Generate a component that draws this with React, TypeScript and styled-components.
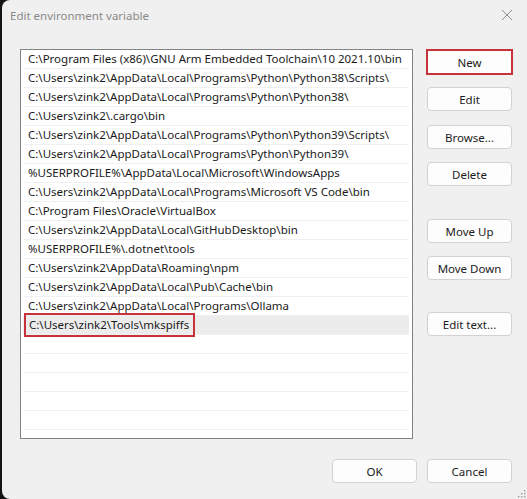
import React from "react";
import { styled, createGlobalStyle } from "styled-components";

const GlobalStyle = createGlobalStyle`
  html, body {
    margin: 0;
    padding: 0;
    background: #141414;
  }
  * {
    box-sizing: border-box;
  }
`;

const paths = [
  "C:\\Program Files (x86)\\GNU Arm Embedded Toolchain\\10 2021.10\\bin",
  "C:\\Users\\zink2\\AppData\\Local\\Programs\\Python\\Python38\\Scripts\\",
  "C:\\Users\\zink2\\AppData\\Local\\Programs\\Python\\Python38\\",
  "C:\\Users\\zink2\\.cargo\\bin",
  "C:\\Users\\zink2\\AppData\\Local\\Programs\\Python\\Python39\\Scripts\\",
  "C:\\Users\\zink2\\AppData\\Local\\Programs\\Python\\Python39\\",
  "%USERPROFILE%\\AppData\\Local\\Microsoft\\WindowsApps",
  "C:\\Users\\zink2\\AppData\\Local\\Programs\\Microsoft VS Code\\bin",
  "C:\\Program Files\\Oracle\\VirtualBox",
  "C:\\Users\\zink2\\AppData\\Local\\GitHubDesktop\\bin",
  "%USERPROFILE%\\.dotnet\\tools",
  "C:\\Users\\zink2\\AppData\\Roaming\\npm",
  "C:\\Users\\zink2\\AppData\\Local\\Pub\\Cache\\bin",
  "C:\\Users\\zink2\\AppData\\Local\\Programs\\Ollama",
];

const newPath = "C:\\Users\\zink2\\Tools\\mkspiffs";

const sideButtons = [
  { label: "New", gap: 0, marked: true },
  { label: "Edit", gap: 13, marked: false },
  { label: "Browse...", gap: 14, marked: false },
  { label: "Delete", gap: 13, marked: false },
  { label: "Move Up", gap: 33, marked: false },
  { label: "Move Down", gap: 13, marked: false },
  { label: "Edit text...", gap: 32, marked: false },
];

export default function App() {
  return (
    <>
      <GlobalStyle />
      <Window>
        <TitleBar>
          <Title>Edit environment variable</Title>
          <CloseIcon width="12" height="12" viewBox="0 0 12 12">
            <path d="M1 1 L11 11 M11 1 L1 11" stroke="#8c8c8c" strokeWidth="1" />
          </CloseIcon>
        </TitleBar>
        <Content>
          <ListBox>
            {paths.map((p) => (
              <Row key={p}>
                <RowText>{p}</RowText>
              </Row>
            ))}
            <Row $selected>
              <Marked>{newPath}</Marked>
            </Row>
            {Array.from({ length: 6 }).map((_, i) => (
              <Row key={"empty" + i} />
            ))}
          </ListBox>
          <SideColumn>
            {sideButtons.map((b) => (
              <Button key={b.label} $gap={b.gap} $marked={b.marked}>
                {b.label}
              </Button>
            ))}
          </SideColumn>
        </Content>
        <Footer>
          <Button $gap={0}>OK</Button>
          <Button $gap={0}>Cancel</Button>
        </Footer>
        <Grip width="10" height="10" viewBox="0 0 10 10">
          <rect x="8" y="2" width="1.4" height="1.4" fill="#9a9a9a" />
          <rect x="5" y="5" width="1.4" height="1.4" fill="#9a9a9a" />
          <rect x="8" y="5" width="1.4" height="1.4" fill="#9a9a9a" />
          <rect x="2" y="8" width="1.4" height="1.4" fill="#9a9a9a" />
          <rect x="5" y="8" width="1.4" height="1.4" fill="#9a9a9a" />
          <rect x="8" y="8" width="1.4" height="1.4" fill="#9a9a9a" />
        </Grip>
      </Window>
    </>
  );
}

const Window = styled.div`
  position: relative;
  margin-left: 2px;
  width: 525px;
  height: 499px;
  background: #f0f0f0;
  border-radius: 8px 0 0 8px;
  font-family: "Noto Sans", "Open Sans", sans-serif;
  font-size: 11.5px;
  color: #1a1a1a;
  display: flex;
  flex-direction: column;
  overflow: hidden;
`;

const TitleBar = styled.div`
  height: 30px;
  display: flex;
  align-items: center;
  justify-content: space-between;
  padding: 0 14px 0 8px;
`;

const Title = styled.span`
  color: #8a8a8a;
  font-size: 11.5px;
`;

const CloseIcon = styled.svg`
  display: block;
`;

const Content = styled.div`
  display: flex;
  align-items: flex-start;
  padding: 19px 0 0 18px;
  height: 409px;
`;

const ListBox = styled.div`
  width: 393px;
  height: 390px;
  background: #ffffff;
  border: 1px solid #828282;
  padding: 0 3px 0 2px;
  overflow: hidden;
`;

const Row = styled.div<{ $selected?: boolean }>`
  height: 19px;
  border-bottom: 1px solid #f0f0f0;
  background: ${(p) => (p.$selected ? "#ececec" : "#ffffff")};
  display: flex;
  align-items: center;
  position: relative;
`;

const RowText = styled.span`
  padding-left: 5px;
  white-space: nowrap;
  line-height: 18px;
`;

const Marked = styled.span`
  margin-left: 1px;
  padding: 0 4px 0 3px;
  height: 24px;
  line-height: 20px;
  border: 2px solid #c7333a;
  white-space: nowrap;
  position: relative;
  z-index: 1;
`;

const SideColumn = styled.div`
  margin-left: 14px;
  padding-top: 1px;
  display: flex;
  flex-direction: column;
  width: 85px;
`;

const Button = styled.div<{ $gap: number; $marked?: boolean }>`
  margin-top: ${(p) => p.$gap}px;
  width: 85px;
  height: 24px;
  background: #fdfdfd;
  border: 1px solid #d2d2d2;
  border-radius: 4px;
  display: flex;
  align-items: center;
  justify-content: center;
  color: #1b1b1b;
  ${(p) =>
    p.$marked &&
    `
    border-radius: 0;
    border: 1px solid #c7333a;
    box-shadow: 0 0 0 1px #c7333a;
  `}
`;

const Footer = styled.div`
  display: flex;
  justify-content: flex-end;
  gap: 10px;
  padding: 20px 15px 0 0;
`;

const Grip = styled.svg`
  position: absolute;
  right: 1px;
  bottom: 1px;
`;
